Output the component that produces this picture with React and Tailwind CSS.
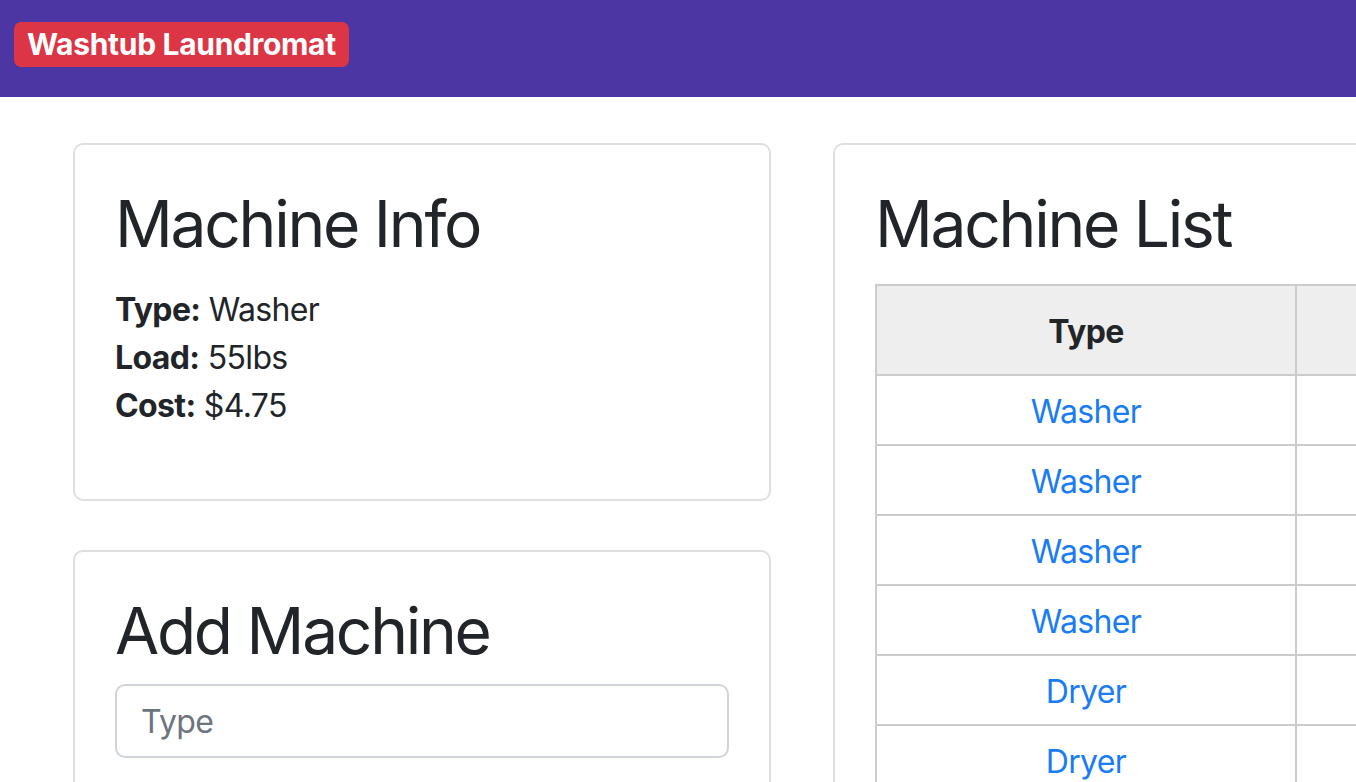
import React from "react";

const machines = [
  { type: "Washer", load: "55lbs", cost: "$4.75" },
  { type: "Washer", load: "40lbs", cost: "$3.50" },
  { type: "Washer", load: "30lbs", cost: "$2.75" },
  { type: "Washer", load: "20lbs", cost: "$2.25" },
  { type: "Dryer", load: "50lbs", cost: "$0.25" },
  { type: "Dryer", load: "30lbs", cost: "$0.25" },
  { type: "Dryer", load: "30lbs", cost: "$0.25" },
];

const Card = ({ children, className = "" }) => (
  <div className={"border-2 border-[#dfdfdf] rounded-[10px] px-[40px] pt-[40px] " + className}>
    {children}
  </div>
);

export default function App() {
  return (
    <div className="w-full h-screen overflow-hidden bg-white text-[#212529] [font-family:Inter,'Noto_Sans',sans-serif]">
      <nav className="h-[97px] bg-[#4b36a3] px-[14px] pt-[22px]">
        <span className="inline-block h-[45px] leading-[45px] px-[13px] rounded-[7px] bg-[#dc3545] text-white font-bold text-[30px] tracking-[-0.01em]">
          Washtub Laundromat
        </span>
      </nav>

      <main className="flex gap-[62px] pl-[73px] pt-[46px]">
        <div className="w-[698px] shrink-0 flex flex-col gap-[49px]">
          <Card className="pb-[40px]">
            <h1 className="text-[64px] leading-[77px] font-normal tracking-[-0.035em] mb-[24px]">Machine Info</h1>
            <div className="text-[32px] leading-[48px] tracking-[-0.02em] mb-[29px]">
              <div><span className="font-bold">Type:</span> Washer</div>
              <div><span className="font-bold">Load:</span> 55lbs</div>
              <div><span className="font-bold">Cost:</span> $4.75</div>
            </div>
          </Card>

          <Card className="pb-[40px]">
            <h1 className="text-[64px] leading-[77px] font-normal tracking-[-0.035em] mb-[15px]">Add Machine</h1>
            <input
              type="text"
              placeholder="Type"
              className="w-full h-[74px] border-2 border-[#ced4da] rounded-[10px] px-[24px] text-[32px] tracking-[-0.02em] placeholder:text-[#6c757d] outline-none"
            />
            <input
              type="text"
              placeholder="Load"
              className="w-full h-[74px] mt-[24px] border-2 border-[#ced4da] rounded-[10px] px-[24px] text-[32px] tracking-[-0.02em] placeholder:text-[#6c757d] outline-none"
            />
          </Card>
        </div>

        <div className="w-[1100px] shrink-0">
          <Card className="pb-[40px]">
            <h1 className="text-[64px] leading-[77px] font-normal tracking-[-0.035em] mb-[22px]">Machine List</h1>
            <table className="table-fixed border-collapse w-[1016px] text-[32px] leading-[48px] tracking-[-0.02em] text-center">
              <colgroup>
                <col className="w-[420px]" />
                <col className="w-[298px]" />
                <col className="w-[298px]" />
              </colgroup>
              <thead>
                <tr className="bg-[#eeeeee]">
                  <th className="border-2 border-[#cccccc] pt-[22px] pb-[18px] font-bold">Type</th>
                  <th className="border-2 border-[#cccccc] pt-[22px] pb-[18px] font-bold">Load</th>
                  <th className="border-2 border-[#cccccc] pt-[22px] pb-[18px] font-bold">Cost</th>
                </tr>
              </thead>
              <tbody>
                {machines.map((m, i) => (
                  <tr key={i}>
                    <td className="border-2 border-[#cccccc] pt-[12px] pb-[8px] text-[#1a7cf5]">{m.type}</td>
                    <td className="border-2 border-[#cccccc] pt-[12px] pb-[8px]">{m.load}</td>
                    <td className="border-2 border-[#cccccc] pt-[12px] pb-[8px]">{m.cost}</td>
                  </tr>
                ))}
              </tbody>
            </table>
          </Card>
        </div>
      </main>
    </div>
  );
}
